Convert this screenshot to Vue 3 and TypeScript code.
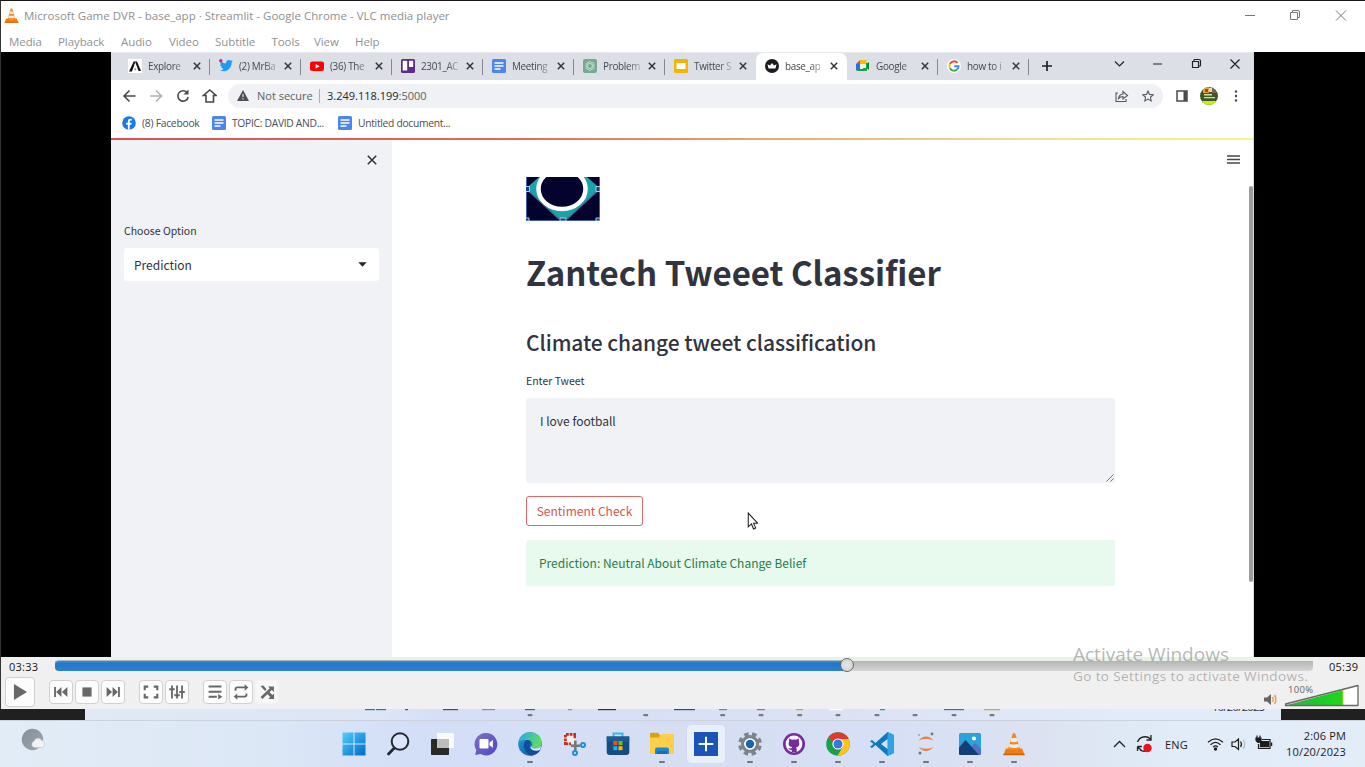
<script setup lang="ts">
interface Tab { title: string; icon: string; active?: boolean; bar?: boolean }
interface TaskItem { icon: string; running?: boolean; active?: boolean }

const menus: { label: string; w: number }[] = [
  { label: 'Media', w: 49 }, { label: 'Playback', w: 63 }, { label: 'Audio', w: 48 },
  { label: 'Video', w: 46 }, { label: 'Subtitle', w: 56.5 }, { label: 'Tools', w: 42.5 },
  { label: 'View', w: 41 }, { label: 'Help', w: 40 },
]

const tabs: Tab[] = [
  { title: 'Explore', icon: 'explore', bar: true },
  { title: '(2) MrBa', icon: 'twitter', bar: true },
  { title: '(36) The', icon: 'youtube', bar: true },
  { title: '2301_AC', icon: 'trello', bar: true },
  { title: 'Meeting', icon: 'docs', bar: true },
  { title: 'Problem', icon: 'gpt', bar: true },
  { title: 'Twitter S', icon: 'slides' },
  { title: 'base_ap', icon: 'crown', active: true },
  { title: 'Google', icon: 'meet', bar: true },
  { title: 'how to i', icon: 'google', bar: true },
]

const icons: Record<string, string> = {
  explore: '<rect width="14" height="14" fill="#fff"/><path d="M1 12.5 5.7 2.5h1.8L4 12.5z" fill="#111"/><path d="M7 2.5h2l4 9.5h-2.4z" fill="#111"/><circle cx="7.3" cy="10.3" r="1.1" fill="#7d93b8"/>',
  twitter: '<path d="M1 11.2c1.5 0 2.7-.4 3.8-1.2-1.2 0-2.1-.8-2.5-1.9h1.1C2.1 7.700 1.200 6.600 1.200 5.200l1.200.3C1.200 4.600.8 3 1.600 1.700c1.400 1.700 3.200 2.700 5.500 2.800-.4-2 1-3.600 2.800-3.600.8 0 1.500.3 2 .8l1.700-.6-1.200 1.500 1.500-.4-1.300 1.400c.1 4.500-3.100 8.600-7.700 8.600-1.400 0-2.800-.4-3.900-1z" fill="#1d9bf0"/><circle cx="1.800" cy="1.800" r="1.700" fill="#e0245e"/>',
  youtube: '<rect y="2.500" width="14" height="9.500" rx="2.300" fill="#f00"/><path d="M5.600 5v4.500l4-2.250z" fill="#fff"/>',
  trello: '<rect width="14" height="14" rx="1.500" fill="#5e2a8c"/><rect x="1.700" y="1.800" width="4.500" height="9.800" rx=".6" fill="#fff"/><rect x="8" y="1.800" width="4.200" height="6.200" rx=".6" fill="#fff"/>',
  docs: '<rect width="14" height="14" rx="1.500" fill="#4a86ee"/><path d="M2.500 4h9M2.500 7h9M2.500 10h6" stroke="#fff" stroke-width="1.400"/>',
  gpt: '<rect width="14" height="14" rx="2" fill="#74aa8f"/><g fill="none" stroke="#c3dccf" stroke-width=".8"><ellipse cx="7" cy="7" rx="2.300" ry="4.700"/><ellipse cx="7" cy="7" rx="2.300" ry="4.700" transform="rotate(60 7 7)"/><ellipse cx="7" cy="7" rx="2.300" ry="4.700" transform="rotate(120 7 7)"/></g>',
  slides: '<rect width="14" height="14" rx="1.500" fill="#f4b400"/><rect x="2.500" y="4" width="9" height="6" fill="#fff"/>',
  crown: '<circle cx="7" cy="7" r="7" fill="#1b1b22"/><path d="M2.500 5.200 5 6.600 7 4l2 2.600 2.500-1.400-1 4.300h-7z" fill="#fff"/>',
  meet: '<path d="M0 5l4-4v4z" fill="#ea4335"/><path d="M0 5h4v6H0z" fill="#2b6de8"/><path d="M4 1h6.500v4H4z" fill="#fbbc04"/><path d="M0 10h10.500v2H1.500Q0 12 0 10z" fill="#1a9b4b"/><path d="M10.500 5 13 3v8l-2.500-2z" fill="#00832d"/><path d="M4 5h6v5H4z" fill="#e9f4ee"/><path d="M10 4h1v7h-1zM7 9h4v3H7z" fill="#10a84a"/>',
  google: '<circle cx="7" cy="7" r="7" fill="#fff"/><g fill="none" stroke-width="1.900"><path d="M10.600 3.900A4.600 4.600 0 0 0 2.900 5" stroke="#ea4335"/><path d="M2.900 5a4.600 4.600 0 0 0 0 4.100" stroke="#fbbc05"/><path d="M2.900 9.100a4.600 4.600 0 0 0 7.400 1.200" stroke="#34a853"/><path d="M10.200 10.400A4.600 4.600 0 0 0 11.600 7.200H7.200" stroke="#4285f4"/></g>',
}

const facebook = '<circle cx="7" cy="7" r="6.800" fill="#1779e8"/><path d="M7.700 13.800V8.700h1.700l.3-2H7.700V5.500c0-.6.300-1 1.100-1h1V2.800C7.300 2.400 5.900 3.200 5.900 5.100v1.600H4.200v2h1.700v5z" fill="#fff"/>'

const cone = '<path d="M5.300 16 9.800 1.500q1.200-1.200 2.400 0L16.700 16q-5.700 3-11.400 0z" fill="#f28a1c"/><path d="M8.500 5.800h5l1 3.300q-3.500 1.300-7 0zM6.800 11.200q4.200 1.600 8.400 0l1 3.200q-5.200 2-10.400 0z" fill="#eceae6"/><path d="M3.200 15.800h2.100q5.700 3 11.400 0h2.100l2.200 6.200H1z" fill="#ee7d12"/><path d="M1 20.700h20l.4 1.500H.6z" fill="#d96506"/>'

const taskIcons: Record<string, string> = {
  start: '<defs><linearGradient id="win" x2="1" y2="1"><stop stop-color="#50d0fb"/><stop offset="1" stop-color="#0069c9"/></linearGradient></defs><path d="M.5.500h11v11H.5zM12.500.500h11v11h-11zM.5 12.500h11v11H.5zM12.500 12.500h11v11h-11z" fill="url(#win)"/>',
  search: '<circle cx="14" cy="9.500" r="8.300" fill="#e4ebf7" fill-opacity=".5" stroke="#222a31" stroke-width="2"/><path d="M8.300 16 2.500 22" stroke="#222a31" stroke-width="2.800" stroke-linecap="round"/>',
  taskview: '<rect x="1" y="7" width="18" height="16" rx=".7" fill="#292929"/><rect x="7" y="1" width="17" height="15" rx=".7" fill="#fafafa"/><path d="M7 7h12v9H7z" fill="#bdbdbd"/>',
  chat: '<defs><linearGradient id="cht" x2="1" y2="1"><stop stop-color="#7e73c8"/><stop offset="1" stop-color="#5145bf"/></linearGradient></defs><path d="M12 1a11.200 11.200 0 1 1-5.300 21L1.200 23l1-5A11.200 11.200 0 0 1 12 1z" fill="url(#cht)"/><rect x="5.500" y="7" width="9" height="9.500" rx="1.300" fill="#fff"/><path d="m15.500 10.500 3.400-2.400v7.600l-3.400-2.400z" fill="#fff"/>',
  edge: '<defs><linearGradient id="eg" y2=".9"><stop stop-color="#2a9fe0"/><stop offset="1" stop-color="#0b4c98"/></linearGradient><linearGradient id="eg2" x2="1" y2=".4"><stop stop-color="#26a9e3"/><stop offset="1" stop-color="#5fdc66"/></linearGradient></defs><circle cx="12" cy="12" r="11.800" fill="url(#eg)"/><path d="M.5 9.500C2.300 3.500 6.600.200 12 .200 19 .200 23.800 5 23.800 10.500c0 4-3.300 6-6.800 6-2.800 0-4.200-1-3.200-2.500 1.600-2.600-.7-6-5-6-3.500 0-6.800.5-8.300 1.500z" fill="url(#eg2)"/><path d="M8.800 8C4 10 4.500 20 13.500 23.700 18 23 21 20.500 22.300 18c-4 2-9 1.200-10.500-2.500-1.200-3 1.200-3.800.8-5.500-.5-1.500-2-2.200-3.800-2z" fill="#104e9b"/><path d="M13.700 14c-1 1.500.4 2.500 3.200 2.500 3 0 5.500-1.200 6.300-3l-.8 4.200c-4 2-8.500.8-9.700-1.500-.6-1 .2-1.800 1-2.200z" fill="#dcebf7"/>',
  snip: '<path d="M2 1h12v11H2z" fill="#f6eeeb"/><path d="M3.400 13V2.400H14M3.400 11.800H9" fill="none" stroke="#ba3526" stroke-width="2.800" stroke-dasharray="2.900 .8"/><path d="M12.800 3v4" stroke="#ba3526" stroke-width="2.400" stroke-dasharray="2.900 .8"/><path d="M13.300 8.500v10M9 13.700h9" stroke="#777" stroke-width="2.600"/><circle cx="13" cy="21" r="2" fill="none" stroke="#1b8fd3" stroke-width="1.900"/><circle cx="21" cy="13" r="2" fill="none" stroke="#1b8fd3" stroke-width="1.900"/>',
  store: '<path d="M7.500 5V1.500h9V5" fill="none" stroke="#35b6ea" stroke-width="1.900"/><path d="M.7 4.500h22.600V20a3 3 0 0 1-3 3H3.700a3 3 0 0 1-3-3z" fill="#174c82"/><path d="M.7 4.500h22.600v5H.7z" fill="#1b5c93"/><path d="M7.300 9h4v4h-4z" fill="#f25022"/><path d="M12.500 9h4v4h-4z" fill="#7fba00"/><path d="M7.300 14.200h4v4h-4z" fill="#19b1f0"/><path d="M12.500 14.200h4v4h-4z" fill="#ffb900"/>',
  folder: '<path d="M0 2q0-1.300 1.300-1.300h7l2 3v3H0z" fill="#dca013"/><path d="M0 5.500h8.500l3-3.500H23q1 0 1 1V21q0 1-1 1H1q-1 0-1-1z" fill="#fccf4a"/><path d="M5 22v-4.500q0-2 2-2h10q2 0 2 2V22z" fill="#1e87cf"/><path d="M7 19h10v3H7z" fill="#176db4"/>',
  plus: '<rect width="24" height="24" fill="#1b54b9"/><path d="M12 4.700v14.600M4.700 12h14.600" stroke="#fff" stroke-width="2"/>',
  settings: '<circle cx="12" cy="12" r="9.900" fill="none" stroke="#7b848b" stroke-width="4" stroke-dasharray="4.400 3.375" transform="rotate(10 12 12)"/><circle cx="12" cy="12" r="7.300" fill="#fff" stroke="#7b848b" stroke-width="3.400"/><circle cx="12" cy="12" r="5.800" fill="#fff"/><circle cx="12" cy="12" r="4.200" fill="#1667ae"/>',
  github: '<circle cx="12" cy="12" r="11" fill="#732e96"/><circle cx="12" cy="12" r="8.400" fill="#f7f0fa"/><path d="M7.300 6.500 10 7.800q2-.5 4 0l2.700-1.300.3 3.300q1.300 4.700-3 5.700.7.500.7 2V20H9.800v-2q-2.500.5-3.500-2 2 .8 3.500 0l.3-.7q-4.500-1-3.100-5.500z" fill="#732e96"/>',
  chrome: '<circle cx="12" cy="12" r="11.800" fill="#1e9d4c"/><path d="M12 7h10.700A11.800 11.800 0 0 1 11.500 23.800L17 14.500z" fill="#fbc618"/><path d="M1.900 6A11.800 11.800 0 0 1 22.200 6.100L22.700 7H12a5 5 0 0 0-4.700 3.500L2.800 4.700z" fill="#e03a2d"/><circle cx="12" cy="12" r="5.600" fill="#fff"/><circle cx="12" cy="12" r="4.500" fill="#3578e5"/>',
  vscode: '<path d="M17.500 0 24 3v18l-6.500 3L5.500 13 2 16l-2-1.300L3.500 12 0 9.300 2 8l3.500 3z" fill="#0d79be"/><path d="M17.500 0 24 3v18l-6.500 3z" fill="#30a2e8"/><path d="M17.500 7v10L11 12z" fill="#d9e3f7"/>',
  jupyter: '<path d="M4.500 8.500q7.500-8 15 0-7.500-3.700-15 0zM4.500 15q7.500 8 15 0-7.500 3.700-15 0z" fill="#ee7a3b"/><circle cx="18" cy="2" r="1.400" fill="#71767b"/><circle cx="5" cy="3" r=".8" fill="#71767b"/><circle cx="6" cy="21" r="1.500" fill="#71767b"/>',
  photos: '<rect x="1" y="1" width="22" height="22" rx="1.500" fill="#2aa3dc"/><path d="M11 17 17 11l6 6v4.500q0 1.500-1.500 1.500H9z" fill="#4f72c9"/><path d="M1 15.500 7.500 8 21 23H2.500Q1 23 1 21.500z" fill="#143e78"/><circle cx="16" cy="6.500" r="2.100" fill="#fff"/>',
  vlc: cone,
}

const tasks: TaskItem[] = [
  { icon: 'start' }, { icon: 'search' }, { icon: 'taskview' }, { icon: 'chat' },
  { icon: 'edge', running: true }, { icon: 'snip' }, { icon: 'store' },
  { icon: 'folder', running: true }, { icon: 'plus', active: true },
  { icon: 'settings', running: true }, { icon: 'github', running: true },
  { icon: 'chrome', running: true }, { icon: 'vscode', running: true },
  { icon: 'jupyter', running: true }, { icon: 'photos', running: true }, { icon: 'vlc', running: true },
]

const playerGroups: string[][] = [
  [
    '<path d="M4.500 6.500h2v11h-2zM12.500 6.500v11L6.700 12zM19 6.500v11L13 12z"/>',
    '<path d="M7 7h10v10H7z"/>',
    '<path d="M17.500 6.500h2v11h-2zM11.500 6.500v11l5.800-5.500zM5 6.500v11l6-5.500z"/>',
  ],
  [
    '<path d="M4 5h5v2.300H6.300V10H4zM15 5h5v5h-2.300V7.300H15zM4 14h2.300v2.700H9V19H4zM17.700 14H20v5h-5v-2.300h2.700z"/>',
    '<path d="M5.500 5h2v14h-2zM11 5h2v14h-2zM16.500 5h2v14h-2zM3.500 8h6v2h-6zM9 14.500h6v2H9zM14.500 11h6v2h-6z"/>',
  ],
  [
    '<path d="M5 5h14v2.200H5zM5 10.500h14v2.200H5zM5 16h9v2.200H5zM15.500 14.300l4.500 2.900-4.500 2.900z"/>',
    '<path d="M5 10.500V9q0-3 3-3h8V3.500L20 7l-4 3.500V8H8q-1 0-1 1.500v1zM19 13.500V15q0 3-3 3H8v2.500L4 17l4-3.500V16h8q1 0 1-1.500v-1z"/>',
    '<path d="M5 5.500 8 5l3.500 4-1.700 1.800zM5 17.500l10-9.700L13.200 6H19.500v6L17.200 9.700 7 19.500zM14.500 12l3.500 3.200 1.700-1.700v6h-6.200l2-2-3.200-3.200z"/>',
  ],
]

/* Tops of the icons and running marks visible in the strip above the taskbar. */
const slivers: { x: number; w: number; c: string }[] = [
  { x: 365, w: 10, c: '#147fae' }, { x: 376, w: 10, c: '#147fae' }, { x: 405, w: 3, c: '#555' },
  { x: 443, w: 15, c: '#4b4f58' }, { x: 482, w: 13, c: '#8783c9' }, { x: 525, w: 10, c: '#236b94' },
  { x: 568, w: 4, c: '#6c9dc5' }, { x: 598, w: 18, c: '#1f3557' }, { x: 674, w: 21, c: '#274c95' },
  { x: 719, w: 8, c: '#7b8390' }, { x: 757, w: 8, c: '#8c69aa' }, { x: 796, w: 7, c: '#c7a633' },
  { x: 829, w: 14, c: '#ffffff' }, { x: 880, w: 5, c: '#1994b7' }, { x: 944, w: 20, c: '#4867a5' },
  { x: 984, w: 16, c: '#c1a35b' },
]
const marks = [530, 645.7, 722.7, 761, 799.7, 838, 877, 915, 954, 992]
</script>

<template>
  <div class="screen">
    <section class="player">
      <header class="titlebar">
        <svg class="cone" viewBox="0 0 22 23" v-html="cone" />
        <span class="title">Microsoft Game DVR - base_app · Streamlit - Google Chrome - VLC media player</span>
        <svg class="wctl" width="120" height="16" viewBox="0 0 120 16" fill="none" stroke="#777" stroke-width="1">
          <path d="M5 8.500h10M50.500 5.500h7v7h-7zM52.500 5.500v-2h5.500q1.500 0 1.500 1.500v5.500h-2M96 3.500l10 10M106 3.500l-10 10" />
        </svg>
      </header>
      <nav class="menubar">
        <span v-for="m in menus" :key="m.label" :style="{ width: m.w + 'px' }">{{ m.label }}</span>
      </nav>

      <div class="video">
        <div class="browser">
          <div class="tabstrip">
            <div v-for="t in tabs" :key="t.title" class="tab" :class="{ active: t.active, bar: t.bar }">
              <svg class="fav" viewBox="0 0 14 14" v-html="icons[t.icon]" />
              <span class="tabtitle">{{ t.title }}</span>
              <svg class="x" viewBox="0 0 8 8"><path d="M.8.800l6.400 6.400M7.200.800.800 7.200" stroke="#33363a" stroke-width="1.500" /></svg>
            </div>
            <svg class="newtab" viewBox="0 0 12 12"><path d="M6 1v10M1 6h10" stroke="#222" stroke-width="1.700" /></svg>
            <svg class="bctl" width="128" height="16" viewBox="0 0 128 16" fill="none" stroke="#222" stroke-width="1.200">
              <path d="m4 5.500 4.500 4.500L13 5.500M42 8h9M81.500 5.500h6v6h-6zM83 5V4q0-.5.500-.5H88q1.500 0 1.500 1.500v4.500q0 .5-.5.500h-1M119.500 3.500l9 9M128.500 3.500l-9 9" />
            </svg>
          </div>

          <div class="toolbar">
            <svg class="nav" width="96" height="20" viewBox="0 0 96 20" fill="none" stroke="#46494d" stroke-width="1.600">
              <path d="M14.500 10H3.500M8.500 4.500 3 10l5.500 5.500" />
              <path d="M29 10h11M35 4.500l5.500 5.500-5.500 5.500" stroke="#b0b2b5" />
              <path d="M66 6.500A5.200 5.200 0 1 0 67.200 11" /><path d="M67.500 3.500v5h-5z" fill="#46494d" stroke="none" />
              <path d="M82.500 9.500H85V16h7.500V9.500H95L88.800 4z" />
            </svg>
            <div class="address">
              <svg class="warn" viewBox="0 0 12 11"><path d="M6 0l6 11H0z" fill="#4c4f54" /><path d="M6 4v3M6 8.200v1.300" stroke="#eff1f4" stroke-width="1.100" /></svg>
              <span class="secure">Not secure</span>
              <i class="divider" />
              <span class="url"><b>3.249.118.199</b>:5000</span>
              <svg class="acts" width="42" height="16" viewBox="0 0 42 16" fill="none" stroke="#55585c" stroke-width="1.100">
                <path d="M4 5H2v8.500h10V11M4.500 10.500Q5 6.500 9 6V3.500l4.500 4L9 11V8.500Q6.500 8.500 4.500 10.500z" />
                <path d="m34 3 1.500 3.400 3.700.4-2.800 2.500.8 3.700-3.200-1.900-3.200 1.900.8-3.700-2.800-2.500 3.700-.4z" />
              </svg>
            </div>
            <svg class="panel" viewBox="0 0 12 12"><path d="M1 1h10v10H1z" fill="none" stroke="#4a4c50" stroke-width="1.500" /><path d="M7.500 1H11v10H7.500z" fill="#4a4c50" /></svg>
            <svg class="avatar" viewBox="0 0 18 18">
              <defs><clipPath id="av"><circle cx="9" cy="9" r="9" /></clipPath></defs>
              <g clip-path="url(#av)"><path d="M0 0h18v18H0z" fill="#3c5a1c" /><path d="M3 0h6v6H3z" fill="#dca838" /><path d="M5 2h3v3H5z" fill="#c9372b" /><path d="M9 1h3v4H9z" fill="#e8dccb" /><path d="M12 0h4v6h-4z" fill="#76645b" /><path d="M4 7h8v1.500H4zM4 10h11v1.300H4z" fill="#cfdcc0" /><path d="M0 14h18v4H0z" fill="#c5ee1c" /></g>
            </svg>
            <svg class="dots" viewBox="0 0 4 12" fill="#46494d"><circle cx="2" cy="1.500" r="1.200" /><circle cx="2" cy="6" r="1.200" /><circle cx="2" cy="10.500" r="1.200" /></svg>
          </div>

          <div class="bookmarks">
            <svg class="fav" viewBox="0 0 14 14" v-html="facebook" /><span class="bm1">(8) Facebook</span>
            <svg class="fav" viewBox="0 0 14 14" v-html="icons.docs" /><span class="bm2">TOPIC: DAVID AND...</span>
            <svg class="fav" viewBox="0 0 14 14" v-html="icons.docs" /><span class="bm3">Untitled document...</span>
          </div>
          <div class="rainbow" />

          <div class="page">
            <aside class="sidebar">
              <svg class="close" viewBox="0 0 10 10"><path d="M.8.800l8.400 8.400M9.200.800.800 9.200" stroke="#333640" stroke-width="1.600" /></svg>
              <label class="optlabel">Choose Option</label>
              <div class="select"><span>Prediction</span><svg width="9" height="5" viewBox="0 0 9 5"><path d="M.3.300h8.400L4.500 4.800z" fill="#262730" /></svg></div>
            </aside>
            <main class="content">
              <svg class="logo" width="74" height="44" viewBox="0 0 74 44">
                <rect width="74" height="44" fill="#03032e" />
                <path d="M13 0h48l13 11.500L43 40l-6 4-6-4L0 11.500z" fill="#1aa3a8" />
                <path d="M0 11.500 33 42M74 11.500 41 42" stroke="#456f99" stroke-width="1.500" />
                <ellipse cx="36" cy="12" rx="23.500" ry="20" fill="#03032e" stroke="#fff" stroke-width="4.500" />
                <path d="M.5 0v43.500h73V0" fill="none" stroke="#455ba0" />
                <g fill="#173e83" stroke="#a9cdf0"><path d="M-.5 9.500h4v5h-4zM70 9.500h4v5h-4zM34 41h6v3h-6zM-.5 41h3.500v3H-.5zM70 41h4v3h-4z" /></g>
              </svg>
              <h1>Zantech Tweeet Classifier</h1>
              <h3>Climate change tweet classification</h3>
              <label class="tweetlabel">Enter Tweet</label>
              <div class="textarea"><span>I love football</span>
                <svg class="grip" viewBox="0 0 8 8"><path d="M.5 7.500l7-7M4.500 7.500l3-3" stroke="#777" /></svg>
              </div>
              <button type="button" class="check">Sentiment Check</button>
              <div class="alert">Prediction: Neutral About Climate Change Belief</div>
            </main>
            <svg class="burger" viewBox="0 0 13 9"><path d="M0 1h13M0 4.500h13M0 8h13" stroke="#45474d" stroke-width="1.500" /></svg>
            <i class="scroll" />
            <svg class="cursor" viewBox="0 0 10 17"><path d="M1 1v13l3-2.700 2 4.700 2-1-2-4.300h4z" fill="#fff" stroke="#222" /></svg>
          </div>
        </div>
      </div>

      <div class="seekrow">
        <span class="time">03:33</span>
        <div class="groove"><div class="played" /><i class="knob" /></div>
        <span class="time total">05:39</span>
      </div>
      <div class="controls">
        <div class="btn play"><svg viewBox="0 0 30 30"><path d="M8.500 6.500 22.500 15l-14 8.500z" fill="#686868" /></svg></div>
        <div v-for="(g, i) in playerGroups" :key="i" class="group">
          <div v-for="(ic, j) in g" :key="j" class="btn" :class="{ faint: i === 2 && j === 2 }"><svg viewBox="0 0 24 24" fill="#686868" v-html="ic" /></div>
        </div>
        <svg class="volume" width="96" height="25" viewBox="0 0 96 25">
          <defs><linearGradient id="vol"><stop stop-color="#4e9e55" /><stop offset=".6" stop-color="#19cc27" /><stop offset=".97" stop-color="#23d51e" /><stop offset="1" stop-color="#dccb24" /></linearGradient></defs>
          <path d="M1 14.500h3l4-3.500v11l-4-3.500H1z" fill="#666" />
          <path d="M9.500 14q1.500 2.500 0 5M11.500 12q2.800 4.500 0 9" fill="none" stroke="#ee9d3a" stroke-width="1.500" />
          <path d="M22 22.500 95 3v19.500z" fill="#fff" /><path d="M22 22.500 80.500 7v15.500z" fill="url(#vol)" />
          <path d="M22.500 21 95 2.500v20H22.500z" fill="none" stroke="#686868" stroke-width="1.300" stroke-linejoin="round" />
          <text x="25" y="10.200" class="vtext" textLength="25">100%</text>
        </svg>
      </div>
    </section>

    <div class="strip">
      <i class="dark left" />
      <svg class="fragments" width="1196" height="11" viewBox="85 709 1196 11">
        <rect v-for="s in slivers" :key="s.x" :x="s.x" y="709" :width="s.w" height="1.200" :fill="s.c" />
        <rect v-for="m in marks" :key="m" :x="m - 2.500" y="714" width="5" height="2.200" rx="1" fill="#747985" />
        <text x="1212" y="711" class="cuttext" textLength="53">10/20/2023</text>
      </svg>
      <i class="dark right" />
    </div>

    <footer class="taskbar">
      <svg class="weather" viewBox="0 0 24 24"><defs><linearGradient id="wx" x2="1" y2="1"><stop stop-color="#84909a" /><stop offset="1" stop-color="#9da5ad" /></linearGradient></defs><circle cx="11.500" cy="11.500" r="10.700" fill="url(#wx)" /><path d="M13.500 19.500a3.200 3.200 0 0 1-.5-6.200 4.200 4.200 0 0 1 7.600-1 3.700 3.700 0 0 1 .5 7.200z" fill="#f1f2f4" stroke="#c3c8ce" stroke-width=".6" /></svg>
      <div class="tasks">
        <div v-for="t in tasks" :key="t.icon" class="task" :class="{ on: t.active, running: t.running }">
          <svg :viewBox="t.icon === 'vlc' ? '0 0 22 23' : '0 0 24 24'" v-html="taskIcons[t.icon]" />
        </div>
      </div>
      <div class="tray">
        <svg width="42" height="20" viewBox="0 0 42 20" fill="none" stroke="#222" stroke-width="1.300">
          <path d="m2 13 5.500-5.500L13 13M25.500 8a8 8 0 0 1 13-3M39 1v5h-4.500M36 16q-4 2.500-8 0M25.500 12.500h4.500M25.500 12.500V17M25.500 12.500l4 4" />
          <circle cx="35.500" cy="14" r="4.200" fill="#f30d16" stroke="none" />
        </svg>
        <span class="lang">ENG</span>
        <svg class="net" width="66" height="18" viewBox="0 0 66 18" fill="none" stroke="#1d1d1d" stroke-width="1.200">
          <path d="M1 7.300q7.500-7 15 0M3.500 9.800q5-4.800 10 0M6 12.200q2.500-2.600 5 0" /><circle cx="8.500" cy="14" r="1.100" fill="#1d1d1d" />
          <path d="M25 7h3l3.500-3v10.500L28 11.500h-3zM33.500 6.500q2 2.700 0 5.400" /><path d="M36 4.500q3.500 5 0 9.500" stroke="#b3bac2" />
          <path d="M55 4.500h8v9H51.500V9" /><path d="M53.500 6.500H61.500v5.200h-8z" fill="#1d1d1d" /><path d="M64.500 7.500v3.500" stroke-width="1.500" /><path d="M50 .5v3M53 .5v3" /><path d="M49 3h5v2.500l-2 2h-1l-2-2z" fill="#1d1d1d" />
        </svg>
        <div class="clock"><span class="hr">2:06 PM</span><span class="date">10/20/2023</span></div>
      </div>
    </footer>

    <div class="activate"><span class="a1">Activate Windows</span><span class="a2">Go to Settings to activate Windows.</span></div>
  </div>
</template>

<style>
html, body { margin: 0; overflow: hidden; background: #000; }
</style>

<style scoped>
* { box-sizing: border-box; }
.screen { position: relative; width: 1365px; height: 767px; overflow: hidden; font-family: "Open Sans", "Noto Sans", sans-serif; display: flex; flex-direction: column; white-space: nowrap; }
svg { display: block; flex: none; }
.player { height: 709px; background: #fff; border-top: 1px solid #19171b; border-left: 1px solid #333; display: flex; flex-direction: column; }
.titlebar { height: 30px; display: flex; align-items: center; padding: 0 15px 2px 3px; color: #8f8f8f; }
.cone { width: 15px; height: 17px; }
.title { margin-left: 5px; font-size: 11.5px; letter-spacing: .01px; }
.wctl { margin-left: auto; margin-right: -10px; }
.menubar { height: 21px; display: flex; align-items: center; padding-left: 8px; font-size: 11.5px; letter-spacing: -.08px; color: #929292; }
.menubar span { flex: none; }
.video { height: 605px; background: #000; padding-left: 110px; flex: none; }
.browser { width: 1143px; height: 605px; background: #fff; border-right: 1px solid #c5e6bd; display: flex; flex-direction: column; }
.tabstrip { height: 28px; background: #dcdfe5; padding-left: 8px; display: flex; flex: none; border-top: 1px solid #e5e7eb; }
.tab { width: 91px; display: flex; align-items: center; padding: 0 0 1px 9px; position: relative; }
.tab.bar::after { content: ""; position: absolute; right: 0; top: 6px; width: 1px; height: 16px; background: #85888d; }
.tab.active { background: #fff; border-radius: 7px 7px 0 0; }
.fav { width: 14px; height: 14px; }
.tabtitle { margin-left: 6px; width: 42px; font-size: 9.900px; letter-spacing: -.3px; color: #45484e; mask-image: linear-gradient(90deg, #000 60%, rgba(0, 0, 0, .25) 90%); }
.x { width: 8px; height: 8px; margin-left: 3px; }
.newtab { width: 12px; height: 12px; margin: 7px 0 0 12px; }
.bctl { margin: 3px 0 0 58px; overflow: visible; }
.toolbar { height: 31px; display: flex; align-items: center; flex: none; }
.nav { margin-left: 10px; }
.address { margin-left: 11px; width: 935px; height: 24px; border-radius: 12px; background: #eff1f4; display: flex; align-items: center; font-size: 11px; color: #5d6066; }
.warn { width: 12px; height: 11px; margin-left: 9px; }
.secure { margin-left: 8px; width: 57px; }
.divider { width: 1px; height: 14px; background: #aaadb2; margin: 0 7px 0 5px; }
.url { letter-spacing: 0; }
.url b { font-weight: 400; color: #25282c; }
.acts { margin-left: auto; margin-right: 7px; }
.panel { width: 12px; height: 12px; margin-left: 13px; }
.avatar { width: 18px; height: 18px; margin-left: 12px; }
.dots { width: 4px; height: 12px; margin-left: 16px; }
.bookmarks { height: 27px; display: flex; align-items: center; padding: 0 0 4px 11px; font-size: 10.3px; color: #4b4d52; flex: none; }
.bookmarks span { margin-left: 6px; letter-spacing: -.3px; }
.bookmarks .bm1 { width: 70px; letter-spacing: -.25px; }
.bookmarks .bm2 { width: 106px; }
.rainbow { height: 2px; background: linear-gradient(90deg, #dc5055, #e06a5c 35%, #e3b173 60%, #eddf98 80%, #f6f591); flex: none; }
.page { position: relative; flex: 1; display: flex; font-family: "Noto Sans CJK SC", "Source Sans Pro", sans-serif; color: #31333f; }
.sidebar { width: 281px; background: #f0f2f6; padding: 15px 13px 0; display: flex; flex-direction: column; }
.close { width: 10px; height: 10px; align-self: flex-end; margin-right: 2px; }
.optlabel { margin-top: 57px; font-size: 10.500px; line-height: 18px; }
.select { margin-top: 8px; height: 33px; background: #fff; border-radius: 3px; padding: 0 12px 0 10px; display: flex; align-items: center; justify-content: space-between; font-size: 12px; line-height: 20px; }
.content { margin-left: 134px; width: 589px; padding-top: 37px; display: flex; flex-direction: column; }
h1 { margin: 31px 0 0; font-size: 33px; line-height: 40px; font-weight: 700; letter-spacing: -.02px; }
h3 { margin: 35px 0 0; font-size: 21px; line-height: 30px; font-weight: 500; letter-spacing: -.08px; }
.tweetlabel { margin-top: 15px; font-size: 10.500px; line-height: 18px; }
.textarea { position: relative; margin-top: 8px; height: 85px; background: #f0f2f6; border-radius: 3px; padding: 13px 14px; font-size: 12px; line-height: 20px; }
.grip { position: absolute; right: 1px; bottom: 1px; width: 8px; height: 8px; }
.check { margin: 13px 0 0; width: 117px; height: 30px; border: 1px solid #e06765; border-radius: 3px; background: #fff; color: #d9534f; font: 12px/20px "Noto Sans CJK SC", sans-serif; padding: 0; }
.alert { margin-top: 14px; height: 46px; background: #e8f9ee; border-radius: 3px; padding: 13px; color: #2a7d48; font-size: 12px; line-height: 20px; }
.burger { position: absolute; right: 13px; top: 15px; width: 13px; height: 9px; }
.scroll { position: absolute; right: 0; top: 46px; width: 4px; height: 396px; border-radius: 3px; background: #9b9e9e; }
.cursor { position: absolute; left: 636px; top: 372px; width: 11px; height: 18px; }
.seekrow { height: 19px; background: #f0f0f0; display: flex; align-items: flex-start; padding-left: 8px; color: #161616; flex: none; }
.time { width: 46px; font-size: 11px; line-height: 20px; letter-spacing: .25px; }
.groove { position: relative; width: 1259px; height: 14px; border-top: 4px solid #e8f2e5; background: linear-gradient(#b4b4b4, #d6d6d6); border-radius: 0 0 4px 4px; }
.played { width: 792px; height: 10px; background: linear-gradient(#3a8cd8 , #2479c6 25%, #2a82d1); border-radius: 4px 0 0 4px; box-shadow: 0 -1px #a9b8c4; }
.knob { position: absolute; left: 785px; top: -3px; width: 14px; height: 14px; border-radius: 50%; border: 1px solid #686868; background: radial-gradient(#e6e6e6, #cfcfcf); }
.total { margin-left: 16px; width: 36px; }
.controls { height: 33px; background: #f0f0f0; display: flex; align-items: flex-start; padding: 4px 6px 0 48px; position: relative; flex: 1; }
.btn { width: 24px; height: 24px; background: #fcfcfc; border: 1px solid #d1d1d1; border-radius: 4px; }
.btn svg { width: 22px; height: 22px; }
.btn.play { width: 30px; height: 30px; margin: -3px 14px 0 -44px; }
.btn.play svg { width: 28px; height: 28px; }
.btn.faint { border-color: #f3f3f3; background: #f7f7f7; }
.group { display: flex; gap: 2px; margin-right: 14px; }
.volume { margin: 3px 0 0 auto; }
.vtext { font-size: 9.500px; fill: #666; }
.strip { height: 11px; display: flex; flex: none; background: linear-gradient(90deg, #e0e9f5 85px, #dbe6f6 28%, #d3e0f8 32%, #dbe2f4 62%, #e0ecf9 82%); overflow: hidden; }
.dark { background: #202020; height: 11px; flex: none; }
.dark.left { width: 85px; }
.dark.right { width: 84px; }
.cuttext { font-size: 11px; fill: #333; }
.taskbar { position: relative; height: 47px; border-top: 1px solid #cbd2dd; background: linear-gradient(90deg, #e2ecf7, #dde8f6 18%, #d3dff7 30%, #d7def3 50%, #d6dff5 64%, #dce2f1 76%, #e1ecf8 86%, #e2edf8); display: flex; }
.weather { width: 24px; height: 24px; margin: 7px 0 0 21px; }
.tasks { display: flex; margin-left: 287px; }
.task { position: relative; width: 44px; padding: 11px 10px 0; }
.task svg { position: relative; width: 24px; height: 24px; }
.task.on::before { content: ""; position: absolute; left: 3px; top: 4px; width: 38px; height: 38px; border-radius: 4px; background: #eaf0fa; box-shadow: 0 0 1px #b9c3d4; }
.task.running::after { content: ""; position: absolute; left: 19px; top: 39.500px; width: 6px; height: 2.500px; border-radius: 2px; background: #72767e; }
.tray { display: flex; margin-left: 76px; align-items: center; color: #1b1b1b; }
.lang { margin-left: 11px; width: 42px; font-size: 11px; letter-spacing: .2px; }
.net { margin-right: 12px; }
.clock { display: flex; flex-direction: column; align-items: flex-end; width: 61px; font-size: 11px; line-height: 16px; letter-spacing: .15px; }
.activate { position: absolute; left: 1073px; top: 642px; display: flex; flex-direction: column; color: rgba(135, 135, 135, .6); }
.a1 { font-size: 19px; line-height: 24px; }
.a2 { font-size: 13.500px; line-height: 21px; letter-spacing: .4px; }
</style>
